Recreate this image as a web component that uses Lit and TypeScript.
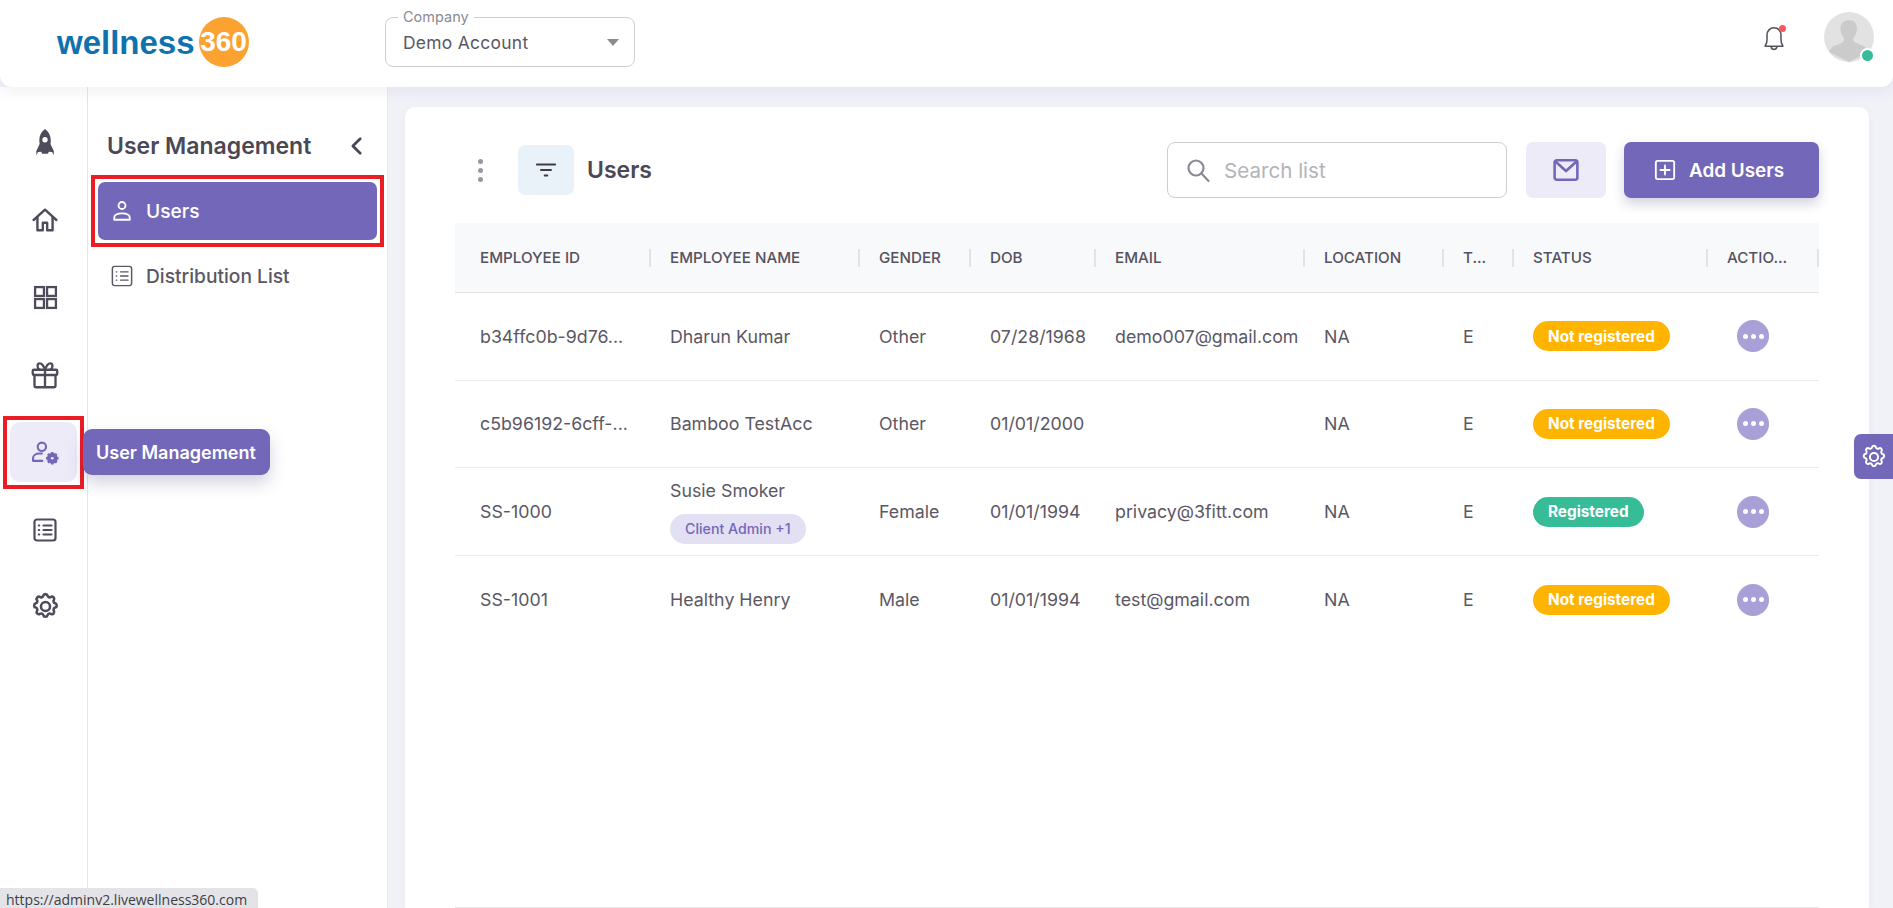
import { LitElement, html, css, svg } from "lit";
import { customElement } from "lit/decorators.js";

const COLS = [
  ["EMPLOYEE ID", 196], ["EMPLOYEE NAME", 209], ["GENDER", 111], ["DOB", 125], ["EMAIL", 209],
  ["LOCATION", 139], ["T...", 70], ["STATUS", 194], ["ACTIO...", 111],
] as const;

const ROWS = [
  { id: "b34ffc0b-9d76...", name: "Dharun Kumar", gender: "Other", dob: "07/28/1968", email: "demo007@gmail.com", ok: false },
  { id: "c5b96192-6cff-...", name: "Bamboo TestAcc", gender: "Other", dob: "01/01/2000", email: "", ok: false },
  { id: "SS-1000", name: "Susie Smoker", chip: "Client Admin +1", gender: "Female", dob: "01/01/1994", email: "privacy@3fitt.com", ok: true },
  { id: "SS-1001", name: "Healthy Henry", gender: "Male", dob: "01/01/1994", email: "test@gmail.com", ok: false },
];

const gearPath = "M10.3 3.6c.4-1.6 2.9-1.6 3.3 0a1.7 1.7 0 0 0 2.6 1c1.4-.9 3.2.7 2.3 2.3a1.7 1.7 0 0 0 1 2.6c1.6.4 1.6 2.9 0 3.3a1.7 1.7 0 0 0-1 2.6c.9 1.4-.7 3.2-2.3 2.3a1.7 1.7 0 0 0-2.6 1c-.4 1.6-2.9 1.6-3.3 0a1.7 1.7 0 0 0-2.6-1c-1.4.9-3.2-.7-2.3-2.3a1.7 1.7 0 0 0-1-2.6c-1.6-.4-1.6-2.9 0-3.3a1.7 1.7 0 0 0 1-2.6c-.9-1.4.7-3.2 2.3-2.3a1.7 1.7 0 0 0 2.6-1z";

const stroke = (w: number, body: unknown, size = 24) => html`<svg width=${size} height=${size} viewBox="0 0 24 24" fill="none" stroke="currentColor" stroke-width=${w} stroke-linecap="round" stroke-linejoin="round">${body}</svg>`;

const icons = {
  rocket: html`<svg width="26" height="30" viewBox="0 0 24 28"><path fill="currentColor" fill-rule="evenodd" d="M12 1c3.600 2.600 5.400 6.200 5.400 10.400 0 1.200-.1 2.400-.3 3.500l3.200 6.900-.3 3.600-1.300-3-3.200-.3c-.2 1.200-.8 1.900-1.500 1.900h-3.900c-.7 0-1.300-.7-1.500-1.900l-3.200.3-1.300 3-.3-3.600 3.200-6.900c-.2-1.100-.3-2.300-.3-3.500C6.600 7.200 8.400 3.600 12 1zm0 7.500a2.500 2.500 0 1 0 0 5 2.500 2.500 0 0 0 0-5z"/></svg>`,
  home: stroke(2.200, svg`<path d="M1.500 12 12 2.500 22.500 12"/><path d="M5 9.500V21.500h5v-7h4v7h5V9.500"/>`, 26),
  grid: stroke(2.200, svg`<rect x="2" y="2" width="8.500" height="8.500" stroke-linejoin="miter"/><rect x="13.500" y="2" width="8.500" height="8.500" stroke-linejoin="miter"/><rect x="2" y="13.500" width="8.500" height="8.500" stroke-linejoin="miter"/><rect x="13.500" y="13.500" width="8.500" height="8.500" stroke-linejoin="miter"/>`, 25),
  gift: stroke(2, svg`<rect x="1.500" y="7.500" width="21" height="4.500" rx="1"/><path d="M3 12v9.500a1 1 0 0 0 1 1h16a1 1 0 0 0 1-1V12M12 7.500v15M12 7.500C10.500 3 9 2 7.500 2 5 2 5 6 7.500 7.500M12 7.500C13.500 3 15 2 16.500 2c2.500 0 2.500 4 0 5.500"/>`, 28),
  userCog: html`<svg width="28" height="25" viewBox="0 0 26 24" fill="none"><circle cx="10" cy="6.500" r="4" stroke="currentColor" stroke-width="2"/><path d="M1.500 19.500v-2c0-2.800 2.800-4.500 6-4.500h2.500M1.500 20h9" stroke="currentColor" stroke-width="2" stroke-linecap="round"/><circle cx="20" cy="17.500" r="3.600" stroke="currentColor" stroke-width="3.200"/><path d="M20 11.500v12M14 17.500h12M15.800 13.300l8.400 8.400M24.200 13.300l-8.400 8.400" stroke="currentColor" stroke-width="2.400"/><circle cx="20" cy="17.500" r="1.300" fill="#ecebf7"/></svg>`,
  list: stroke(2.200, svg`<rect x="1.500" y="1.500" width="21" height="21" rx="2.500"/><path d="M10.500 7.500H18.500M10.500 12H18.500M10.500 16.500H18.500M5.800 7.500h.4M5.800 12h.4M5.800 16.500h.4"/>`),
  gear: stroke(2, svg`<path d=${gearPath}/><circle cx="12" cy="12" r="3.500"/>`, 31),
  user: stroke(2, svg`<circle cx="12" cy="6" r="3.800"/><path d="M3.500 21.500v-2c0-3 3-5 8.500-5s8.500 2 8.500 5v2z"/>`, 22),
  listSm: stroke(1.600, svg`<rect x="1.500" y="1.500" width="21" height="21" rx="2.500"/><path d="M10.500 7.500H18.500M10.500 12H18.500M10.500 16.500H18.500M5.800 7.500h.4M5.800 12h.4M5.800 16.500h.4"/>`, 22),
  chevron: stroke(3, svg`<path d="M15.500 4 7.500 12l8 8"/>`, 22),
  filter: stroke(2, svg`<path d="M2 6h20M6.500 12h11M10.500 18h3"/>`, 22),
  search: stroke(2.200, svg`<circle cx="10" cy="10" r="7.500"/><path d="M15.500 15.500 22.500 23"/>`, 24),
  mail: stroke(2.400, svg`<rect x="1.500" y="3" width="21" height="18" rx="2"/><path d="m2 4 10 9 10-9"/>`, 26),
  plus: stroke(2, svg`<rect x="2" y="2" width="20" height="20" rx="2"/><path d="M12 7v10M7 12h10"/>`, 22),
  bell: html`<svg width="28" height="28" viewBox="0 0 24 24" fill="none" stroke="currentColor" stroke-width="1.300" stroke-linecap="round" stroke-linejoin="round"><path d="M5 17.500c.8-1 1-2.500 1-4.500V9.500C6 6 8.500 3.200 12 3.200S18 6 18 9.500V13c0 2 .2 3.500 1 4.500.5.600.6 1.200.6 1.500H4.400c0-.3.1-.9.600-1.500z"/><path d="M9.500 19.500c.3 1.500 1.300 2.300 2.500 2.300s2.200-.8 2.500-2.300"/></svg>`,
  gearWhite: stroke(1.700, svg`<path d=${gearPath}/><circle cx="12" cy="12" r="3.500"/>`, 28),
};

@customElement("app-root")
export class AppRoot extends LitElement {
  static styles = css`
    :host { display: block; height: 908px; overflow: hidden; background: #f1f2f8; color: #4f4b5a; font-family: Inter, "Liberation Sans", sans-serif; position: relative; }
    * { box-sizing: border-box; }
    .top { height: 87px; background: #fff; border-radius: 0 0 12px 12px; display: flex; align-items: center; box-shadow: 0 4px 14px rgba(60, 60, 100, .08); position: relative; z-index: 2; padding-right: 19px; }
    .logo { width: 385px; flex: none; display: flex; align-items: center; padding-left: 57px; height: 100%; }
    .logo b { font-family: "Liberation Sans", sans-serif; font-size: 33px; color: #0f72ae; font-weight: 700; line-height: 1; margin-top: -3px; }
    .ball { width: 50px; height: 50px; border-radius: 50%; background: #fba231; margin-left: 4px; display: flex; align-items: center; justify-content: center; color: #fff; font: 700 28px "Liberation Sans", sans-serif; margin-top: -3px; }
    .company { width: 250px; height: 50px; margin-top: -3px; border: 1px solid #cfcfd3; border-radius: 8px; display: flex; align-items: center; justify-content: space-between; padding: 0 15px 0 17px; position: relative; font-size: 17.400px; letter-spacing: .3px; color: #5b5764; }
    .company label { position: absolute; left: 12px; top: -9px; background: #fff; padding: 0 5px; font-size: 14.500px; line-height: 16px; color: #8b8993; letter-spacing: 0; }
    .caret { width: 0; height: 0; border: 6px solid transparent; border-top: 7px solid #8a8a8f; border-bottom: 0; }
    .spacer { flex: 1; }
    .bell { position: relative; color: #55515d; display: flex; margin-right: 36px; margin-top: -11px; }
    .bell::after { content: ""; position: absolute; top: 1px; right: 2px; width: 7px; height: 7px; border-radius: 50%; background: #f65a5e; }
    .avatar { width: 50px; height: 50px; border-radius: 50%; background: #e2e2e2; position: relative; margin-top: -13px; }
    .avatar svg { display: block; border-radius: 50%; }
    .avatar i { position: absolute; right: 1px; bottom: 1px; width: 11px; height: 11px; border: 2px solid #fff; border-radius: 50%; background: #33bd98; box-sizing: content-box; margin: -2px; }
    .body { display: flex; height: 821px; }
    .rail { width: 88px; flex: none; background: #fff; border-right: 1px solid #e6e6e9; padding: 26px 0 0 10px; display: flex; flex-direction: column; gap: 17.330px; color: #4f4b5a; }
    .tile { width: 67px; height: 60px; border-radius: 10px; display: flex; align-items: center; justify-content: center; position: relative; flex: none; padding-left: 3px; }
    .tile.on { background: #ecebf7; color: #7367b9; }
    .tile.on::after, .nav.on::after { content: ""; position: absolute; border: 4.500px solid #ea1c24; pointer-events: none; }
    .tile.on::after { inset: -6.500px -6.500px -6.500px -7.500px; }
    .tip { position: absolute; left: 73px; top: 7px; height: 46px; width: 187px; background: #7367b9; color: #fff; border-radius: 9px; display: flex; align-items: center; padding-left: 13px; font-size: 18px; font-weight: 600; white-space: nowrap; box-shadow: 0 8px 16px rgba(60, 55, 110, .22); z-index: 3; }
    .side { width: 300px; flex: none; background: #fff; border-right: 1px solid #e9e9ee; padding: 0 10px; }
    .side h2 { margin: 0; height: 88px; padding: 37px 9px 0 9px; display: flex; justify-content: space-between; font-size: 23px; font-weight: 600; line-height: 44px; color: #4b4755; }
    .side h2 svg { margin-top: 11px; }
    .nav { height: 58px; border-radius: 7px; display: flex; align-items: center; gap: 13px; padding-left: 13px; font-size: 19.200px; color: #5b5764; font-weight: 500; }
    .nav.on { background: #7367b9; color: #fff; margin-top: 7px; width: 279px; position: relative; }
    .nav.on::after { inset: -7px; }
    .nav.off { margin-top: 7px; color: #5b5764; }
    .main { flex: 1; padding: 20px 24px 0 17px; min-width: 0; }
    .card { background: #fff; border-radius: 10px 10px 0 0; height: 801px; padding: 35px 50px 0 50px; display: flex; flex-direction: column; box-shadow: 0 2px 8px rgba(60, 60, 100, .04); }
    .bar { display: flex; align-items: center; height: 56px; margin-bottom: 25px; }
    .dots { width: 5px; display: flex; flex-direction: column; gap: 4px; margin-left: 23px; margin-right: 35px; }
    .dots i { width: 5px; height: 5px; border-radius: 50%; background: #98969f; }
    .ftile { width: 56px; height: 50px; background: #eaf2f9; border-radius: 7px; display: flex; align-items: center; justify-content: center; color: #3e3b46; margin-right: 13px; }
    .bar h1 { margin: 0; font-size: 23px; font-weight: 600; color: #4b4755; flex: 1; }
    .search { width: 340px; height: 56px; border: 1px solid #cfcfd3; border-radius: 8px; display: flex; align-items: center; padding-left: 18px; gap: 14px; color: #8b8993; font-size: 20.600px; margin-right: 19px; }
    .search span { color: #b5b3ba; }
    .mailb { width: 80px; height: 56px; background: #ecebf7; border-radius: 7px; color: #7367b9; display: flex; align-items: center; justify-content: center; margin-right: 18px; }
    .add { width: 195px; height: 56px; background: #7367b9; color: #fff; border-radius: 7px; display: flex; align-items: center; padding-left: 30px; gap: 13px; font-size: 18.900px; font-weight: 600; box-shadow: 0 6px 12px rgba(60, 55, 110, .22); }
    .grid { display: grid; grid-template-columns: 196px 209px 111px 125px 209px 139px 70px 194px 111px; }
    .head { height: 70px; background: #f8f9fb; border-bottom: 1px solid #e6e6e9; align-items: center; }
    .th { display: flex; align-items: center; justify-content: space-between; padding-left: 19px; font-size: 15.200px; font-weight: 500; color: #55515d; }
    .th:first-child { padding-left: 25px; }
    .th i { width: 2px; height: 18px; background: #e3e3e6; }
    .row { height: 87.670px; align-items: center; border-bottom: 1px solid #ebebee; font-size: 17.800px; color: #5b5764; }
    .row.last { border-bottom: 0; }
    .td { padding-left: 19px; white-space: nowrap; min-width: 0; }
    .td:first-child { padding-left: 25px; }
    .chip { display: inline-flex; align-items: center; height: 30px; border-radius: 15px; background: #e3e0f3; color: #7367b9; font-size: 14.200px; font-weight: 500; padding: 0 15px; margin-top: 13px; }
    .name { display: flex; flex-direction: column; align-items: flex-start; }
    .pill { display: inline-flex; align-items: center; height: 30px; border-radius: 15px; padding: 0 15px; color: #fff; font-size: 15.300px; font-weight: 700; background: #ffb400; }
    .pill.ok { background: #36bd98; }
    .more { width: 32px; height: 32px; border-radius: 50%; background: #a8a0d6; display: flex; align-items: center; justify-content: center; gap: 3px; margin-left: 10px; }
    .more i { width: 5px; height: 5px; border-radius: 50%; background: #fff; }
    .foot { flex: 1; display: flex; align-items: flex-end; }
    .foot div { width: 100%; height: 1px; background: #e6e6e9; }
    .float { position: absolute; right: 0; top: 434px; width: 39px; height: 45px; background: #7367b9; color: #fff; border-radius: 7px 0 0 7px; display: flex; align-items: center; justify-content: center; z-index: 2; }
    .status { position: absolute; left: 0; bottom: 0; width: 258px; height: 20px; background: #e4e4e8; border-radius: 0 5px 0 0; font: 14px/24px "Open Sans", sans-serif; padding-left: 6px; color: #3c4043; overflow: hidden; white-space: nowrap; z-index: 4; }
  `;

  render() {
    const rail = [icons.rocket, icons.home, icons.grid, icons.gift, icons.userCog, icons.list, icons.gear];
    return html`
      <header class="top">
        <div class="logo"><b>wellness</b><span class="ball">360</span></div>
        <div class="company"><label>Company</label>Demo Account<span class="caret"></span></div>
        <div class="spacer"></div>
        <div class="bell">${icons.bell}</div>
        <div class="avatar">
          <svg width="50" height="50" viewBox="0 0 50 50"><path fill="#cbcbcb" d="M25 8c5 0 8 3.500 8 8.500 0 4-1.500 7-3.500 9.500v3c1 1.500 5 3 9 4.500 3 1.200 5 3.500 6 6.500L25 50 5 40c1-3 3-5.300 6-6.500 4-1.500 8-3 9-4.500v-3c-2-2.500-3.500-5.500-3.500-9.500C16.500 11.500 20 8 25 8z"/></svg>
          <i></i>
        </div>
      </header>
      <div class="body">
        <nav class="rail">
          ${rail.map((ic, i) => html`<div class="tile ${i === 4 ? "on" : ""}">${ic}${i === 4 ? html`<div class="tip">User Management</div>` : ""}</div>`)}
        </nav>
        <aside class="side">
          <h2>User Management ${icons.chevron}</h2>
          <div class="nav on">${icons.user}<span>Users</span></div>
          <div class="nav off">${icons.listSm}<span>Distribution List</span></div>
        </aside>
        <main class="main">
          <section class="card">
            <div class="bar">
              <div class="dots"><i></i><i></i><i></i></div>
              <div class="ftile">${icons.filter}</div>
              <h1>Users</h1>
              <div class="search">${icons.search}<span>Search list</span></div>
              <div class="mailb">${icons.mail}</div>
              <div class="add">${icons.plus}<span>Add Users</span></div>
            </div>
            <div class="grid head">
              ${COLS.map(([t]) => html`<div class="th"><span>${t}</span><i></i></div>`)}
            </div>
            ${ROWS.map((r, n) => html`
              <div class="grid row ${n === ROWS.length - 1 ? "last" : ""}">
                <div class="td">${r.id}</div>
                <div class="td name"><span>${r.name}</span>${r.chip ? html`<span class="chip">${r.chip}</span>` : ""}</div>
                <div class="td">${r.gender}</div>
                <div class="td">${r.dob}</div>
                <div class="td">${r.email}</div>
                <div class="td">NA</div>
                <div class="td">E</div>
                <div class="td"><span class="pill ${r.ok ? "ok" : ""}">${r.ok ? "Registered" : "Not registered"}</span></div>
                <div class="td"><div class="more"><i></i><i></i><i></i></div></div>
              </div>`)}
            <div class="foot"><div></div></div>
          </section>
        </main>
      </div>
      <div class="float">${icons.gearWhite}</div>
      <div class="status">https://adminv2.livewellness360.com</div>
    `;
  }
}
